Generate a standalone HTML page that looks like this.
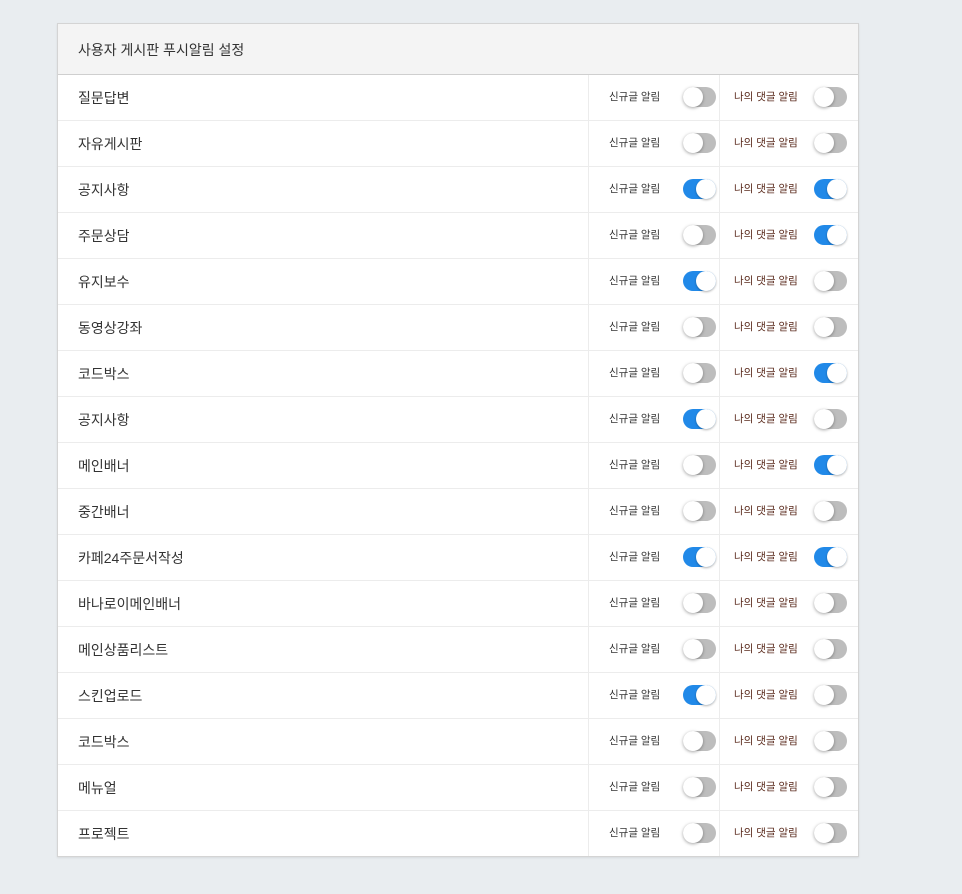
<!DOCTYPE html>
<html><head><meta charset="utf-8"><style>
body{margin:0;background:#e9edf0;font-family:"Liberation Sans","Noto Sans CJK KR",sans-serif;width:962px;height:894px;overflow:hidden}
.box{position:absolute;left:57px;top:23px;width:800px;background:#fff;border:1px solid #d4d4d4;box-shadow:0 1px 2px rgba(0,0,0,.08)}
.hd{height:50px;background:#f4f4f4;border-bottom:1px solid #cfcfcf;font-size:14px;color:#333;line-height:52px;padding-left:20px}
.row{height:45px;border-bottom:1px solid #ececec;position:relative}
.row:last-child{border-bottom:none}
.nm{position:absolute;left:20px;top:0;line-height:46px;font-size:14px;color:#333}
.c1{position:absolute;left:530px;top:0;width:130px;height:100%;border-left:1px solid #ececec}
.c2{position:absolute;left:661px;top:0;width:139px;height:100%;border-left:1px solid #ececec}
.lb{position:absolute;top:0;line-height:45px;font-size:10.5px;color:#333}
.c1 .lb{left:20px}.c2 .lb{left:14px;color:#5a2a1c}
.tg{position:absolute;top:12px;left:94px;width:33px;height:20px;border-radius:10px;background:#bdbdbd}
.tg::after{content:"";position:absolute;left:0;top:0;width:20px;height:20px;border-radius:50%;background:#fff;box-shadow:0 1px 3px rgba(0,0,0,.35)}
.tg.on{background:#2189e8}
.tg.on::after{left:13px;box-shadow:0 1px 2px rgba(0,0,0,.3)}
</style></head><body>
<div class="box">
<div class="hd">사용자 게시판 푸시알림 설정</div>
<div class="row"><span class="nm">질문답변</span><div class="c1"><span class="lb">신규글 알림</span><span class="tg"></span></div><div class="c2"><span class="lb">나의 댓글 알림</span><span class="tg"></span></div></div>
<div class="row"><span class="nm">자유게시판</span><div class="c1"><span class="lb">신규글 알림</span><span class="tg"></span></div><div class="c2"><span class="lb">나의 댓글 알림</span><span class="tg"></span></div></div>
<div class="row"><span class="nm">공지사항</span><div class="c1"><span class="lb">신규글 알림</span><span class="tg on"></span></div><div class="c2"><span class="lb">나의 댓글 알림</span><span class="tg on"></span></div></div>
<div class="row"><span class="nm">주문상담</span><div class="c1"><span class="lb">신규글 알림</span><span class="tg"></span></div><div class="c2"><span class="lb">나의 댓글 알림</span><span class="tg on"></span></div></div>
<div class="row"><span class="nm">유지보수</span><div class="c1"><span class="lb">신규글 알림</span><span class="tg on"></span></div><div class="c2"><span class="lb">나의 댓글 알림</span><span class="tg"></span></div></div>
<div class="row"><span class="nm">동영상강좌</span><div class="c1"><span class="lb">신규글 알림</span><span class="tg"></span></div><div class="c2"><span class="lb">나의 댓글 알림</span><span class="tg"></span></div></div>
<div class="row"><span class="nm">코드박스</span><div class="c1"><span class="lb">신규글 알림</span><span class="tg"></span></div><div class="c2"><span class="lb">나의 댓글 알림</span><span class="tg on"></span></div></div>
<div class="row"><span class="nm">공지사항</span><div class="c1"><span class="lb">신규글 알림</span><span class="tg on"></span></div><div class="c2"><span class="lb">나의 댓글 알림</span><span class="tg"></span></div></div>
<div class="row"><span class="nm">메인배너</span><div class="c1"><span class="lb">신규글 알림</span><span class="tg"></span></div><div class="c2"><span class="lb">나의 댓글 알림</span><span class="tg on"></span></div></div>
<div class="row"><span class="nm">중간배너</span><div class="c1"><span class="lb">신규글 알림</span><span class="tg"></span></div><div class="c2"><span class="lb">나의 댓글 알림</span><span class="tg"></span></div></div>
<div class="row"><span class="nm">카페24주문서작성</span><div class="c1"><span class="lb">신규글 알림</span><span class="tg on"></span></div><div class="c2"><span class="lb">나의 댓글 알림</span><span class="tg on"></span></div></div>
<div class="row"><span class="nm">바나로이메인배너</span><div class="c1"><span class="lb">신규글 알림</span><span class="tg"></span></div><div class="c2"><span class="lb">나의 댓글 알림</span><span class="tg"></span></div></div>
<div class="row"><span class="nm">메인상품리스트</span><div class="c1"><span class="lb">신규글 알림</span><span class="tg"></span></div><div class="c2"><span class="lb">나의 댓글 알림</span><span class="tg"></span></div></div>
<div class="row"><span class="nm">스킨업로드</span><div class="c1"><span class="lb">신규글 알림</span><span class="tg on"></span></div><div class="c2"><span class="lb">나의 댓글 알림</span><span class="tg"></span></div></div>
<div class="row"><span class="nm">코드박스</span><div class="c1"><span class="lb">신규글 알림</span><span class="tg"></span></div><div class="c2"><span class="lb">나의 댓글 알림</span><span class="tg"></span></div></div>
<div class="row"><span class="nm">메뉴얼</span><div class="c1"><span class="lb">신규글 알림</span><span class="tg"></span></div><div class="c2"><span class="lb">나의 댓글 알림</span><span class="tg"></span></div></div>
<div class="row"><span class="nm">프로젝트</span><div class="c1"><span class="lb">신규글 알림</span><span class="tg"></span></div><div class="c2"><span class="lb">나의 댓글 알림</span><span class="tg"></span></div></div>
</div>
</body></html>
